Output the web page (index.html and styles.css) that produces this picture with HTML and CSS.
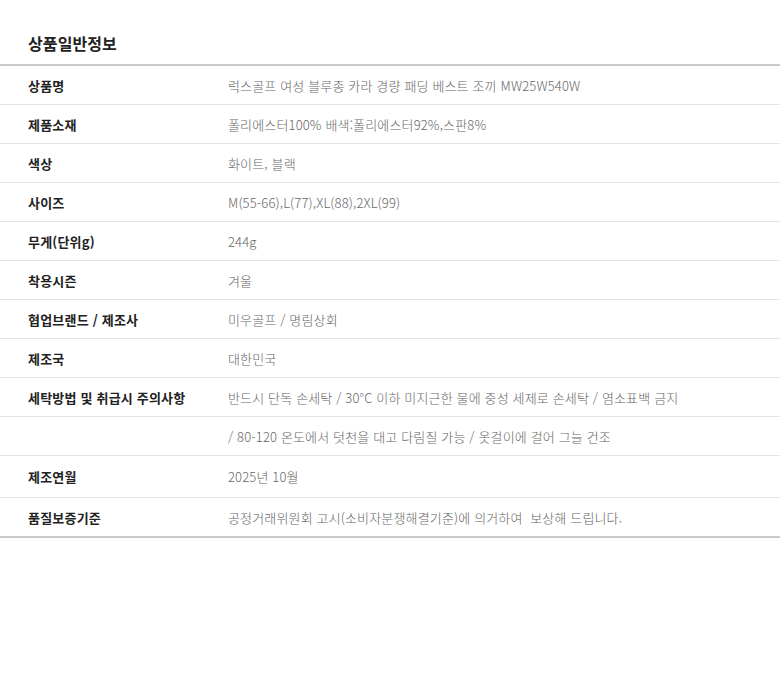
FILE: index.html
```html
<!DOCTYPE html>
<html lang="ko">
<head>
<meta charset="utf-8">
<title>상품일반정보</title>
<link rel="stylesheet" href="styles.css">
</head>
<body>
<section class="info">
  <h2 class="info-title">상품일반정보</h2>
  <div class="info-table">
    <div class="row"><div class="label">상품명</div><div class="value">럭스골프 여성 블루종 카라 경량 패딩 베스트 조끼 MW25W540W</div></div>
    <div class="row"><div class="label">제품소재</div><div class="value">폴리에스터100% 배색:폴리에스터92%,스판8%</div></div>
    <div class="row"><div class="label">색상</div><div class="value">화이트, 블랙</div></div>
    <div class="row"><div class="label">사이즈</div><div class="value">M(55-66),L(77),XL(88),2XL(99)</div></div>
    <div class="row"><div class="label">무게(단위g)</div><div class="value">244g</div></div>
    <div class="row"><div class="label">착용시즌</div><div class="value">겨울</div></div>
    <div class="row"><div class="label">협업브랜드 / 제조사</div><div class="value">미우골프 / 명림상회</div></div>
    <div class="row"><div class="label">제조국</div><div class="value">대한민국</div></div>
    <div class="row"><div class="label">세탁방법 및 취급시 주의사항</div><div class="value">반드시 단독 손세탁 / 30°C 이하 미지근한 물에 중성 세제로 손세탁 / 염소표백 금지</div></div>
    <div class="row"><div class="label"></div><div class="value">/ 80-120 온도에서 덧천을 대고 다림질 가능 / 옷걸이에 걸어 그늘 건조</div></div>
    <div class="row row-tall"><div class="label">제조연월</div><div class="value">2025년 10월</div></div>
    <div class="row"><div class="label">품질보증기준</div><div class="value">공정거래위원회 고시(소비자분쟁해결기준)에 의거하여&nbsp; 보상해 드립니다.</div></div>
  </div>
</section>
</body>
</html>
```
FILE: styles.css
```css
* { box-sizing: border-box; }
html, body { margin: 0; padding: 0; background: #fff; }
body {
  font-family: "Noto Sans CJK KR", "Noto Sans", sans-serif;
  color: #222;
}
.info { padding-top: 30px; }
.info-title {
  margin: 0 0 0 28px;
  height: 34px;
  line-height: 26px;
  font-size: 16px;
  font-weight: 700;
  color: #222;
  letter-spacing: 0.1px;
}
.info-table {
  border-top: 2px solid #c8c8c8;
  border-bottom: 2px solid #c8c8c8;
}
.row {
  display: flex;
  align-items: center;
  height: 39px;
  border-bottom: 1px solid #e4e4e4;
}
.row:last-child { border-bottom: none; height: 38px; }
.row-tall { height: 42px; }
.label {
  width: 228px;
  padding-left: 28px;
  font-size: 13px;
  font-weight: 700;
  color: #222;
  letter-spacing: 0.2px;
}
.value {
  flex: 1;
  font-size: 13px;
  font-weight: 300;
  color: #666;
  letter-spacing: 0.15px;
}
```
